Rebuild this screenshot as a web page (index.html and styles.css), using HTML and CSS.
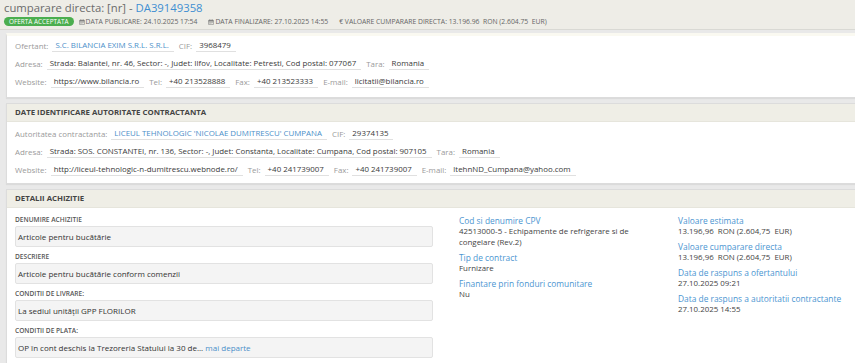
FILE: index.html
```html
<!DOCTYPE html>
<html lang="ro">
<head>
    <meta charset="UTF-8">
    <title>cumparare directa: [nr] - DA39149358</title>
    <link rel="stylesheet" href="styles.css">
</head>
<body>
    <header class="top">
        <h1 class="title">cumparare directa: [nr] - <span class="code">DA39149358</span></h1>
        <div class="meta">
            <span class="badge">OFERTA ACCEPTATA</span>
            <span class="meta-item">
                <svg class="cal" viewBox="0 0 10 10"><rect x="1" y="2" width="8" height="7.5" rx="0.6" fill="none" stroke="#777" stroke-width="1"/><rect x="1" y="2" width="8" height="2.2" fill="#777"/><rect x="2.6" y="0.6" width="1" height="2.2" fill="#777"/><rect x="6.4" y="0.6" width="1" height="2.2" fill="#777"/><path d="M2.5 5.5h1.2v1.2H2.5zM4.4 5.5h1.2v1.2H4.4zM6.3 5.5h1.2v1.2H6.3zM2.5 7.3h1.2v1.2H2.5zM4.4 7.3h1.2v1.2H4.4z" fill="#777"/></svg>
                DATA PUBLICARE: 24.10.2025 17:54
            </span>
            <span class="meta-item">
                <svg class="cal" viewBox="0 0 10 10"><rect x="1" y="2" width="8" height="7.5" rx="0.6" fill="none" stroke="#777" stroke-width="1"/><rect x="1" y="2" width="8" height="2.2" fill="#777"/><rect x="2.6" y="0.6" width="1" height="2.2" fill="#777"/><rect x="6.4" y="0.6" width="1" height="2.2" fill="#777"/><path d="M2.5 5.5h1.2v1.2H2.5zM4.4 5.5h1.2v1.2H4.4zM6.3 5.5h1.2v1.2H6.3zM2.5 7.3h1.2v1.2H2.5zM4.4 7.3h1.2v1.2H4.4z" fill="#777"/></svg>
                DATA FINALIZARE: 27.10.2025 14:55
            </span>
            <span class="meta-item">€ VALOARE CUMPARARE DIRECTA: 13.196.96&nbsp; RON (2.604.75&nbsp; EUR)</span>
        </div>
    </header>

    <main class="main">
        <section class="panel panel-first">
            <div class="panel-body">
                <div class="field-row">
                    <span class="lbl">Ofertant:</span><span class="val link">S.C. BILANCIA EXIM S.R.L. S.R.L.</span>
                    <span class="lbl">CIF:</span><span class="val">3968479</span>
                </div>
                <div class="field-row">
                    <span class="lbl">Adresa:</span><span class="val">Strada: Balantei, nr. 46, Sector: -, Judet: Ilfov, Localitate: Petresti, Cod postal: 077067</span>
                    <span class="lbl">Tara:</span><span class="val">Romania</span>
                </div>
                <div class="field-row">
                    <span class="lbl">Website:</span><span class="val">https://www.bilancia.ro</span>
                    <span class="lbl">Tel:</span><span class="val">+40 213528888</span>
                    <span class="lbl">Fax:</span><span class="val">+40 213523333</span>
                    <span class="lbl">E-mail:</span><span class="val">licitatii@bilancia.ro</span>
                </div>
            </div>
        </section>

        <section class="panel">
            <div class="panel-head">DATE IDENTIFICARE AUTORITATE CONTRACTANTA</div>
            <div class="panel-body">
                <div class="field-row">
                    <span class="lbl">Autoritatea contractanta:</span><span class="val link">LICEUL TEHNOLOGIC 'NICOLAE DUMITRESCU' CUMPANA</span>
                    <span class="lbl">CIF:</span><span class="val">29374135</span>
                </div>
                <div class="field-row">
                    <span class="lbl">Adresa:</span><span class="val">Strada: SOS. CONSTANTEI, nr. 136, Sector: -, Judet: Constanta, Localitate: Cumpana, Cod postal: 907105</span>
                    <span class="lbl">Tara:</span><span class="val">Romania</span>
                </div>
                <div class="field-row">
                    <span class="lbl">Website:</span><span class="val">http://liceul-tehnologic-n-dumitrescu.webnode.ro/</span>
                    <span class="lbl">Tel:</span><span class="val">+40 241739007</span>
                    <span class="lbl">Fax:</span><span class="val">+40 241739007</span>
                    <span class="lbl">E-mail:</span><span class="val">ltehnND_Cumpana@yahoo.com</span>
                </div>
            </div>
        </section>

        <section class="panel">
            <div class="panel-head">DETALII ACHIZITIE</div>
            <div class="panel-body details">
                <div class="col-left">
                    <div class="group">
                        <div class="group-lbl">DENUMIRE ACHIZITIE</div>
                        <div class="box">Articole pentru bucătărie</div>
                    </div>
                    <div class="group">
                        <div class="group-lbl">DESCRIERE</div>
                        <div class="box">Articole pentru bucătărie conform comenzii</div>
                    </div>
                    <div class="group">
                        <div class="group-lbl">CONDITII DE LIVRARE:</div>
                        <div class="box">La sediul unității GPP FLORILOR</div>
                    </div>
                    <div class="group">
                        <div class="group-lbl">CONDITII DE PLATA:</div>
                        <div class="box">OP în cont deschis la Trezoreria Statului la 30 de... <span class="more">mai departe</span></div>
                    </div>
                </div>
                <div class="col-info">
                    <div class="info">
                        <div class="info-title">Cod si denumire CPV</div>
                        <div class="info-val">42513000-5 - Echipamente de refrigerare si de congelare (Rev.2)</div>
                    </div>
                    <div class="info">
                        <div class="info-title">Tip de contract</div>
                        <div class="info-val">Furnizare</div>
                    </div>
                    <div class="info">
                        <div class="info-title">Finantare prin fonduri comunitare</div>
                        <div class="info-val">Nu</div>
                    </div>
                </div>
                <div class="col-info">
                    <div class="info">
                        <div class="info-title">Valoare estimata</div>
                        <div class="info-val">13.196,96&nbsp; RON (2.604,75&nbsp; EUR)</div>
                    </div>
                    <div class="info">
                        <div class="info-title">Valoare cumparare directa</div>
                        <div class="info-val">13.196,96&nbsp; RON (2.604,75&nbsp; EUR)</div>
                    </div>
                    <div class="info">
                        <div class="info-title">Data de raspuns a ofertantului</div>
                        <div class="info-val">27.10.2025 09:21</div>
                    </div>
                    <div class="info">
                        <div class="info-title">Data de raspuns a autoritatii contractante</div>
                        <div class="info-val">27.10.2025 14:55</div>
                    </div>
                </div>
            </div>
        </section>
    </main>
</body>
</html>
```

FILE: styles.css
```css
body {
    margin: 0;
    font-family: "Open Sans", "DejaVu Sans", sans-serif;
    background-color: #e9e9e9;
    color: #444;
    overflow: hidden;
}
.top {
    background-color: #eeede7;
    border-bottom: 1px solid #d9d9d4;
    padding: 1px 4px 0;
    height: 30px;
    box-sizing: border-box;
}
.title {
    margin: 0;
    font-size: 11.3px;
    font-weight: 400;
    line-height: 14px;
    color: #6b6b6b;
}
.title .code {
    color: #3f8fd2;
}
.meta {
    display: flex;
    align-items: center;
    margin-top: 2px;
    font-size: 6.8px;
    color: #666;
}
.badge {
    background-color: #4bae4f;
    color: #fff;
    border-radius: 5px;
    padding: 0 5px;
    height: 9px;
    line-height: 9px;
    font-size: 6.4px;
    margin-right: 5px;
}
.meta-item {
    display: flex;
    align-items: center;
    margin-right: 11px;
}
.cal {
    width: 6px;
    height: 6px;
    margin-right: 1px;
}
.main {
    padding: 3px 0 0 6px;
}
.panel {
    background-color: #fff;
    border: 1px solid #dcdcdc;
    border-right: none;
    margin-bottom: 5px;
    box-shadow: 0 1px 1px rgba(0, 0, 0, 0.06);
}
.panel-first {
    border-top: 3px solid #faf9f1;
}
.panel-head {
    background-color: #efeee6;
    border-bottom: 1px solid #e6e5dc;
    padding: 0 8px;
    height: 17px;
    line-height: 17px;
    font-size: 7.8px;
    font-weight: 700;
    color: #444;
}
.panel-body {
    padding: 3px 8px 4px;
}
.panel-first .panel-body {
    padding: 1px 8px 6px;
}
.field-row {
    display: flex;
    align-items: center;
    height: 18px;
    font-size: 7.9px;
    white-space: nowrap;
}
.lbl {
    color: #9a9a9a;
    margin-right: 4px;
}
.val {
    color: #3a3a3a;
    border-bottom: 1px solid #e0e0e0;
    padding: 0 5px 1px 3px;
    margin-right: 5px;
}
.val.link {
    color: #4b8fc9;
}
.details {
    display: grid;
    grid-template-columns: 418px 193px 1fr;
    column-gap: 26px;
    padding: 7px 8px 6px;
}
.group {
    margin-bottom: 5px;
}
.group-lbl {
    font-size: 6.6px;
    font-weight: 600;
    color: #555;
    line-height: 10px;
    margin-bottom: 1px;
}
.box {
    background-color: #f4f4f4;
    border: 1px solid #e2e2e2;
    border-radius: 2px;
    height: 19px;
    line-height: 19px;
    padding: 0 2px;
    font-size: 8px;
    color: #333;
}
.more {
    color: #4b8fc9;
}
.col-info {
    padding-top: 1px;
}
.info {
    margin-bottom: 5px;
}
.info-title {
    font-size: 8.4px;
    color: #4b95d1;
    line-height: 10px;
}
.info-val {
    font-size: 7.9px;
    color: #444;
    line-height: 11px;
}
```
